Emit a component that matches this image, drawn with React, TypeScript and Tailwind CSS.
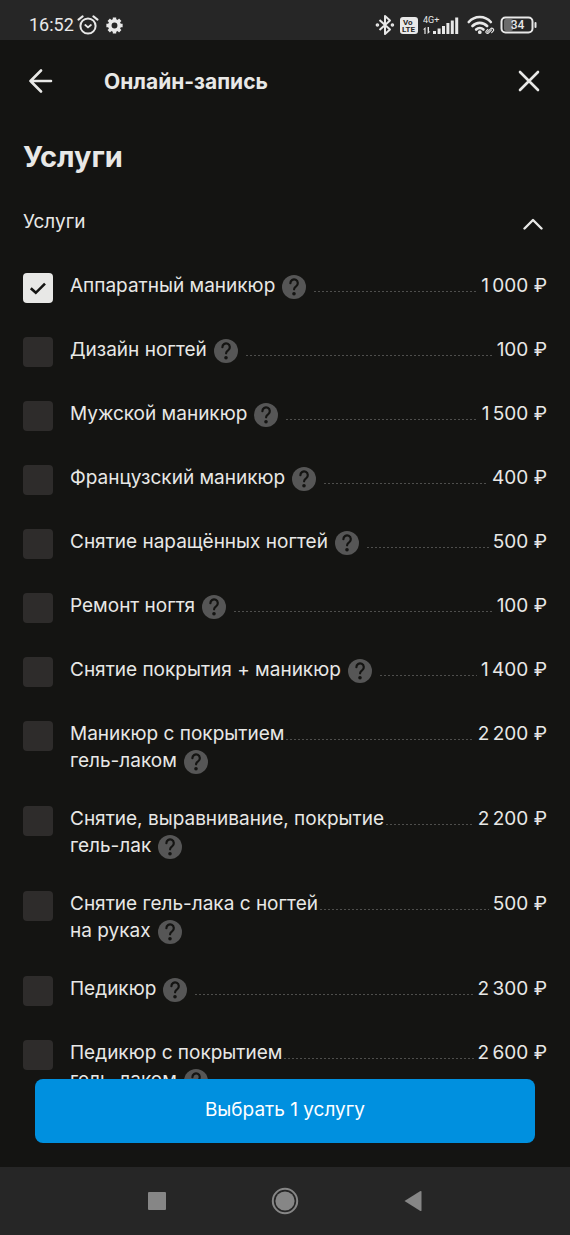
import { useState } from 'react';

type Service = {
  id: string;
  lines: string[];
  price: string;
};

const SERVICES: Service[] = [
  { id: 'apparat', lines: ['Аппаратный маникюр'], price: '1\u2009000' },
  { id: 'design', lines: ['Дизайн ногтей'], price: '100' },
  { id: 'men', lines: ['Мужской маникюр'], price: '1\u2009500' },
  { id: 'french', lines: ['Французский маникюр'], price: '400' },
  { id: 'removal', lines: ['Снятие наращённых ногтей'], price: '500' },
  { id: 'repair', lines: ['Ремонт ногтя'], price: '100' },
  { id: 'removal-manicure', lines: ['Снятие покрытия + маникюр'], price: '1\u2009400' },
  { id: 'gel', lines: ['Маникюр с покрытием', 'гель-лаком'], price: '2\u2009200' },
  { id: 'level', lines: ['Снятие, выравнивание, покрытие', 'гель-лак'], price: '2\u2009200' },
  { id: 'gel-removal', lines: ['Снятие гель-лака с ногтей', 'на руках'], price: '500' },
  { id: 'pedicure', lines: ['Педикюр'], price: '2\u2009300' },
  { id: 'pedicure-gel', lines: ['Педикюр с покрытием', 'гель-лаком'], price: '2\u2009600' },
];

function StatusBar() {
  return (
    <div className="flex h-10 shrink-0 items-center justify-between bg-[#262626] pt-[10px] pr-8 pl-[29px] text-[#e8e8e8]">
      <div className="flex items-center gap-[3px]">
        <span className="font-[Roboto,sans-serif] text-lg leading-6">16:52</span>
        <svg width="22" height="20" viewBox="0 0 22 20" fill="none" stroke="currentColor" strokeLinecap="round">
          <circle cx="11" cy="11" r="7.6" strokeWidth="2" />
          <path d="M1.5 4.6 5.6 1.4M20.5 4.6l-4.1-3.2" strokeWidth="2" />
          <path d="m8.3 10 2.7 2.4 2.9-2.4" strokeWidth="1.8" />
        </svg>
        <svg className="ml-1" width="17" height="17" viewBox="0 0 18 18" fill="none" stroke="currentColor">
          <circle cx="9" cy="9" r="5" strokeWidth="3.8" />
          <path
            d="M9 .4v2.8M9 14.8v2.8M.4 9h2.8M14.8 9h2.8M2.9 2.9l2 2M13.1 13.1l2 2M15.1 2.9l-2 2M4.9 13.1l-2 2"
            strokeWidth="3.6"
          />
        </svg>
      </div>

      <div className="flex items-center gap-[5px]">
        <svg width="20" height="22" viewBox="0 0 20 22" fill="none" stroke="currentColor" strokeWidth="2">
          <path d="m4.5 6 10.5 9.6L10 20V2l5 4.4L4.5 16" strokeLinejoin="round" />
          <circle cx="2.4" cy="11" r=".8" />
          <circle cx="17.4" cy="11" r=".8" />
        </svg>
        <svg width="18" height="17" viewBox="0 0 18 17">
          <rect width="18" height="17" rx="3" fill="currentColor" />
          <text x="3" y="8" fontSize="8" fontWeight="700" fontFamily="Roboto, sans-serif" fill="#262626">
            Vo
          </text>
          <text x="2" y="15" fontSize="8" fontWeight="700" fontFamily="Roboto, sans-serif" fill="#262626">
            LTE
          </text>
        </svg>
        <svg width="36" height="20" viewBox="0 0 36 20" fill="currentColor">
          <text x="0" y="8" fontSize="9" fontFamily="Roboto, sans-serif">
            4G+
          </text>
          <path d="M1.4 19v-4.4H0L2.6 12v7zM4.6 12v7L7.4 16.4H6V12z" />
          <path d="M10 16h3v3h-3zM14.6 13.5h3V19h-3zM19 11h3v8h-3zM23.4 8h3v11h-3zM27.8 5.5h3V19h-3zM32.2 2.5h3V19h-3z" />
        </svg>
        <svg className="ml-[3px]" width="28" height="20" viewBox="0 0 28 20" fill="none" stroke="currentColor" strokeLinecap="round">
          <path d="M1.8 7a14.5 14.5 0 0 1 22 0M5.5 11a10 10 0 0 1 14.6 0M9.2 14.5a5 5 0 0 1 7.2 0" strokeWidth="2.6" />
          <circle cx="12.8" cy="17.2" r="1" strokeWidth="1.8" />
          <path
            d="m20.5 16.8 3-3a1.6 1.6 0 0 1 2.6 2.4l-1.4 1.4M24.6 14.8l-3 3a1.4 1.4 0 0 1-2.4-1.8l1.6-1.6"
            strokeWidth="1.1"
          />
        </svg>
        <svg width="38" height="18" viewBox="0 0 38 18" fill="none">
          <rect x="4" y="3" width="9" height="12" rx="2" fill="#6b6b6b" />
          <rect x="1.5" y="1.5" width="31" height="15" rx="4" stroke="currentColor" strokeWidth="2" />
          <path d="M35.5 7v4" stroke="currentColor" strokeWidth="2" strokeLinecap="round" />
          <text
            x="17.5"
            y="13.2"
            textAnchor="middle"
            fontSize="12"
            fontWeight="500"
            fontFamily="Roboto, sans-serif"
            fill="currentColor"
          >
            34
          </text>
        </svg>
      </div>
    </div>
  );
}

function HelpIcon() {
  return (
    <svg className="size-6" viewBox="0 0 24 24" fill="none">
      <circle cx="12" cy="12" r="12" fill="#565656" />
      <path
        d="M8.4 8.2a3.7 3.7 0 1 1 5.9 2.9c-1.5 1-2.2 1.5-2.2 3.2"
        stroke="#141412"
        strokeWidth="2.2"
        strokeLinecap="round"
      />
      <circle cx="12" cy="18.8" r="1.8" fill="#141412" />
    </svg>
  );
}

type ServiceRowProps = {
  service: Service;
  checked: boolean;
  onToggle: () => void;
};

function ServiceRow({ service, checked, onToggle }: ServiceRowProps) {
  const single = service.lines.length === 1;

  return (
    <li className="flex min-h-16 items-start pb-[31px]">
      <span className="mt-px mr-[17px] grid shrink-0">
        <input
          id={service.id}
          type="checkbox"
          checked={checked}
          onChange={onToggle}
          className="col-start-1 row-start-1 size-[30px] appearance-none rounded bg-[#2e2c2b] checked:bg-[#e8e8e6]"
        />
        {checked && (
          <svg
            className="pointer-events-none col-start-1 row-start-1 place-self-center"
            width="18"
            height="14"
            viewBox="0 0 18 14"
            fill="none"
          >
            <path d="m1.8 7.2 5 4.6L16 2.6" stroke="#141412" strokeWidth="2.6" />
          </svg>
        )}
      </span>

      {/* the help button is cut off at the bottom of the last line */}
      <div className="overflow-hidden whitespace-nowrap">
        {service.lines.map((line, index) => (
          <div key={line} className="flex h-[27px] items-start">
            <label htmlFor={service.id}>{line}</label>
            {index === service.lines.length - 1 && (
              <button type="button" aria-label="Подробнее" className="mt-[3px] ml-[7px]">
                <HelpIcon />
              </button>
            )}
          </div>
        ))}
      </div>

      <span
        className={`mt-[19px] mr-1 h-px flex-1 bg-[repeating-linear-gradient(90deg,#4e4e4c_0_2px,transparent_2px_4px)] ${
          single ? 'ml-2' : 'ml-[2px]'
        }`}
      />

      <span className="whitespace-nowrap">{service.price} ₽</span>
    </li>
  );
}

export default function App() {
  const [selected, setSelected] = useState<string[]>(['apparat']);
  const [open, setOpen] = useState(true);

  function toggle(id: string) {
    setSelected((current) =>
      current.includes(id) ? current.filter((item) => item !== id) : [...current, id],
    );
  }

  return (
    <div className="flex h-screen flex-col bg-[#141412] font-[Inter,sans-serif] text-[19px] leading-[27px] text-[#e8e8e6]">
      <StatusBar />

      <header className="flex h-20 shrink-0 items-center px-7 pt-[2px]">
        <button type="button" aria-label="Назад">
          <svg width="25" height="24" viewBox="0 0 25 24" fill="none" stroke="currentColor" strokeWidth="2.6">
            <path d="M13 1.5 2.5 12 13 22.5M2.5 12H23" strokeLinecap="round" strokeLinejoin="round" />
          </svg>
        </button>
        <h1 className="ml-[51px] flex-1 text-[21px] font-bold">Онлайн-запись</h1>
        <button type="button" aria-label="Закрыть" className="mr-[2px]">
          <svg width="22" height="22" viewBox="0 0 22 22" fill="none" stroke="currentColor" strokeWidth="2.6">
            <path d="m2 2 18 18M20 2 2 20" strokeLinecap="round" />
          </svg>
        </button>
      </header>

      <div className="relative min-h-0 flex-1">
        <main className="h-full overflow-y-auto px-[23px] [scrollbar-width:none]">
          <h2 className="mt-5 text-[29px] leading-[34px] font-bold">Услуги</h2>

          <button
            type="button"
            onClick={() => setOpen(!open)}
            className="mt-[34px] flex w-full items-center justify-between"
          >
            <span>Услуги</span>
            <svg
              className={open ? 'mt-1 mr-1' : 'mt-1 mr-1 rotate-180'}
              width="20"
              height="12"
              viewBox="0 0 20 12"
              fill="none"
              stroke="currentColor"
              strokeWidth="2.4"
            >
              <path d="M1.5 10.5 10 2l8.5 8.5" strokeLinecap="round" strokeLinejoin="round" />
            </svg>
          </button>

          {open && (
            <ul className="mt-[37px] pb-24">
              {SERVICES.map((service) => (
                <ServiceRow
                  key={service.id}
                  service={service}
                  checked={selected.includes(service.id)}
                  onToggle={() => toggle(service.id)}
                />
              ))}
            </ul>
          )}
        </main>

        <button
          type="button"
          className="absolute inset-x-[35px] bottom-6 h-16 rounded-lg bg-[#0090df] pb-1 text-white"
        >
          Выбрать {selected.length} услугу
        </button>
      </div>

      <nav className="flex h-[68px] shrink-0 items-center justify-center gap-[105px] bg-[#262626] text-[#868686]">
        <button type="button" aria-label="Недавние">
          <svg width="18" height="18" viewBox="0 0 18 18" fill="currentColor">
            <rect width="18" height="18" rx="1" />
          </svg>
        </button>
        <button type="button" aria-label="Домой">
          <svg width="28" height="28" viewBox="0 0 28 28">
            <circle cx="14" cy="14" r="12.2" fill="none" stroke="currentColor" strokeWidth="2" />
            <circle cx="14" cy="14" r="9.6" fill="currentColor" />
          </svg>
        </button>
        <button type="button" aria-label="Назад в приложении">
          <svg width="18" height="22" viewBox="0 0 18 22" fill="currentColor">
            <path d="M.5 11 16 1.2q1.5-.8 1.5.6v18.4q0 1.4-1.5.6z" />
          </svg>
        </button>
      </nav>
    </div>
  );
}
